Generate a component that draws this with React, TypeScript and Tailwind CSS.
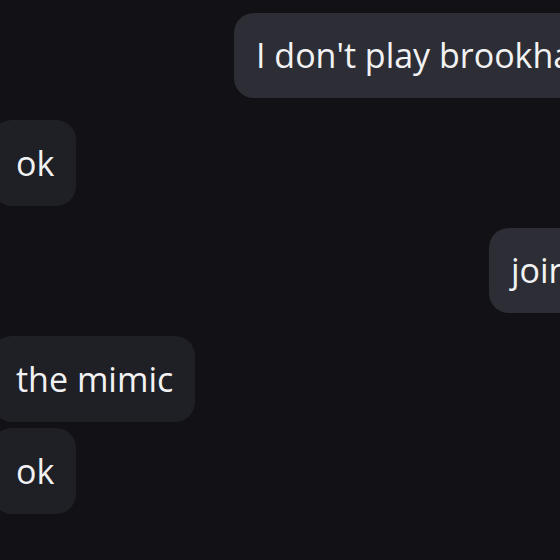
const messages = [
  { id: 1, text: "I don't play brookhaven", mine: true, offset: "ml-[234px]", gap: "mt-[13px]" },
  { id: 2, text: "ok", mine: false, gap: "mt-[22px]" },
  { id: 3, text: "join me", mine: true, offset: "ml-[489px]", gap: "mt-[22px]" },
  { id: 4, text: "the mimic", mine: false, gap: "mt-[23px]" },
  { id: 5, text: "ok", mine: false, gap: "mt-[6px]" },
];

export default function App() {
  return (
    <div
      className="w-[560px] h-[560px] overflow-hidden bg-[#111116] flex flex-col"
      style={{ fontFamily: '"Open Sans", "Noto Sans", sans-serif' }}
    >
      {messages.map((m) =>
        m.mine ? (
          <div key={m.id} className={`flex ${m.gap}`}>
            <div
              className={`${m.offset} shrink-0 h-[85px] flex items-center pl-[22px] pr-6 rounded-[20px] bg-[#2d2e35] text-[#f2f2f4] text-[34px] whitespace-nowrap`}
            >
              {m.text}
            </div>
          </div>
        ) : (
          <div key={m.id} className={`flex ${m.gap}`}>
            <div className="-ml-[8px] h-[86px] flex items-center pl-6 pr-[22px] rounded-[20px] bg-[#1f2026] text-[#f2f2f4] text-[34px] whitespace-nowrap">
              {m.text}
            </div>
          </div>
        )
      )}
    </div>
  );
}
